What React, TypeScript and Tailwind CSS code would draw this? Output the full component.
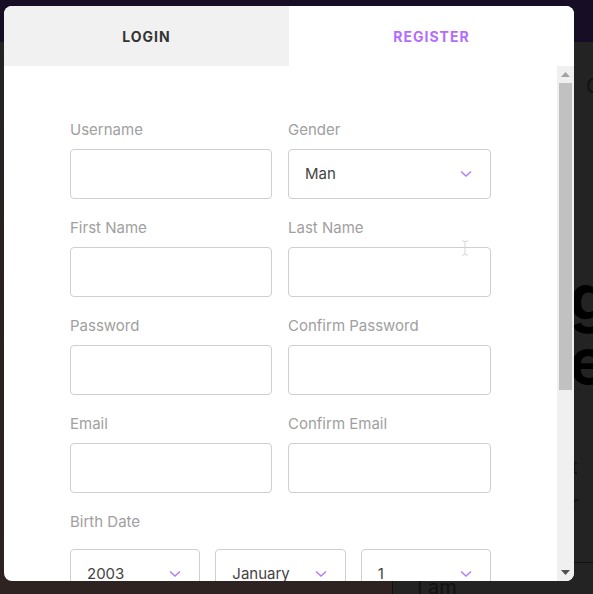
import React from 'react';

const font = { fontFamily: 'Inter, "Noto Sans", sans-serif' };

const Chevron = () => (
    <svg width="12" height="8" viewBox="0 0 12 8" className="shrink-0">
        <path d="M1 1.5 L6 6 L11 1.5" fill="none" stroke="#b57cf6" strokeWidth="1.5" />
    </svg>
);

const Field = ({ label }: { label: string }) => (
    <div className="flex flex-col">
        <label className="text-[15px] leading-5 text-[#a0a0a0] mb-[9px]">{label}</label>
        <div className="h-[50px] rounded border border-[#cfcfcf] bg-white" />
    </div>
);

const SelectBox = ({ value }: { value: string }) => (
    <div className="h-[50px] rounded border border-[#cfcfcf] bg-white flex items-center justify-between pl-4 pr-[18px]">
        <span className="text-[15px] text-[#444]">{value}</span>
        <Chevron />
    </div>
);

const Background = () => (
    <div className="w-[593px] h-[594px] flex flex-col bg-[#232323] overflow-hidden">
        <div className="h-[42px] bg-[#170d24] shrink-0" />
        <div className="flex-1 flex">
            <div className="w-[393px] shrink-0 border-r border-[#111] bg-gradient-to-b from-[#232323] via-[#2a201d] to-[#2e2320]" />
            <div className="flex-1 flex flex-col pt-[30px]">
                <p className="ml-[193px] text-[20px] leading-7 text-[#111] whitespace-nowrap">C</p>
                <div className="ml-[176px] mt-[165px] text-[64px] leading-[64px] font-bold text-black whitespace-nowrap">
                    <div>g</div>
                    <div>e</div>
                </div>
                <p className="ml-[178px] mt-[60px] text-[20px] leading-7 text-[#111] whitespace-nowrap">t</p>
                <p className="ml-[178px] mt-[8px] text-[20px] leading-7 text-[#111] whitespace-nowrap">r</p>
                <div className="mt-[45px] border-t border-[#111]" />
                <p className="ml-[24px] mt-[10px] text-[20px] leading-7 text-[#111] whitespace-nowrap">I am</p>
            </div>
        </div>
    </div>
);

export default function App() {
    return (
        <div className="relative w-[593px] h-[594px] overflow-hidden" style={font}>
            <Background />
            <div className="absolute left-[4px] top-[6px] w-[570px] h-[575px] bg-white rounded-lg overflow-hidden flex flex-col">
                <div className="flex h-[60px] shrink-0">
                    <div className="flex-1 bg-[#f1f1f1] flex items-center justify-center text-[14px] font-bold tracking-[1px] text-[#333]">
                        LOGIN
                    </div>
                    <div className="flex-1 bg-white flex items-center justify-center text-[14px] font-bold tracking-[1px] text-[#b46cff]">
                        REGISTER
                    </div>
                </div>
                <div className="flex-1 flex min-h-0">
                    <div className="relative flex-1 overflow-hidden pl-[66px] pr-[66px] pt-[54px]">
                        <div className="grid grid-cols-[202px_203px] gap-x-4 gap-y-[19px]">
                            <Field label="Username" />
                            <div className="flex flex-col">
                                <label className="text-[15px] leading-5 text-[#a0a0a0] mb-[9px]">Gender</label>
                                <SelectBox value="Man" />
                            </div>
                            <Field label="First Name" />
                            <Field label="Last Name" />
                            <Field label="Password" />
                            <Field label="Confirm Password" />
                            <Field label="Email" />
                            <Field label="Confirm Email" />
                        </div>
                        <div className="mt-[19px]">
                            <label className="block text-[15px] leading-5 text-[#a0a0a0] mb-[17px]">Birth Date</label>
                            <div className="grid grid-cols-3 gap-[15px]">
                                <SelectBox value="2003" />
                                <SelectBox value="January" />
                                <SelectBox value="1" />
                            </div>
                        </div>
                        <svg className="absolute left-[457px] top-[174px]" width="8" height="16" viewBox="0 0 8 16">
                            <path d="M1 1 H3 L4 2 L5 1 H7 M4 2 V14 M1 15 H3 L4 14 L5 15 H7" fill="none" stroke="#d6d6d6" strokeWidth="1" />
                        </svg>
                    </div>
                    <div className="w-[17px] shrink-0 bg-[#f0f0f0] flex flex-col items-center">
                        <div className="h-[17px] flex items-center justify-center">
                            <svg width="9" height="5" viewBox="0 0 9 5"><path d="M0 5 L4.5 0 L9 5 Z" fill="#a3a3a3" /></svg>
                        </div>
                        <div className="w-[13px] h-[307px] bg-[#c1c1c1]" />
                        <div className="flex-1" />
                        <div className="h-[17px] flex items-center justify-center">
                            <svg width="9" height="5" viewBox="0 0 9 5"><path d="M0 0 L9 0 L4.5 5 Z" fill="#505050" /></svg>
                        </div>
                    </div>
                </div>
            </div>
        </div>
    );
}
